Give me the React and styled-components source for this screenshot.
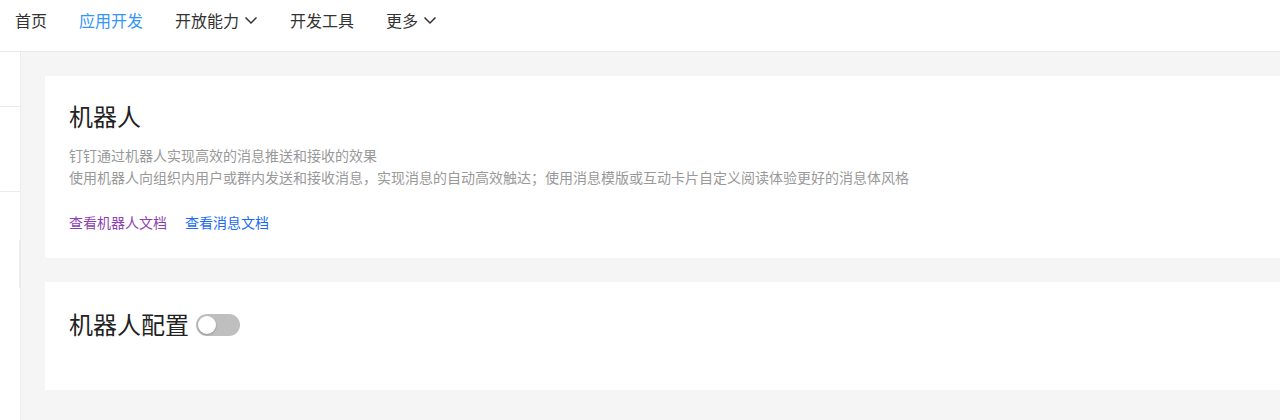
import React, { useState } from "react";
import styled, { createGlobalStyle } from "styled-components";

const GlobalStyle = createGlobalStyle`
  html, body {
    margin: 0;
    padding: 0;
    background: #fff;
    font-family: "Noto Sans CJK SC", "Noto Sans", sans-serif;
    color: #191919;
  }
  * {
    box-sizing: border-box;
  }
`;

const Page = styled.div`
  display: flex;
  flex-direction: column;
  height: 420px;
  overflow: hidden;
`;

const TopNav = styled.nav`
  display: flex;
  align-items: flex-start;
  gap: 32px;
  height: 52px;
  padding: 8px 0 0 15px;
  border-bottom: 1px solid #e8e8e8;
  background: #fff;
  flex-shrink: 0;
`;

const NavItem = styled.a`
  display: flex;
  align-items: center;
  gap: 5px;
  font-size: 16px;
  line-height: 24px;
  color: ${(p) => (p.$active ? "#3296fa" : "#333")};
  text-decoration: none;
  cursor: pointer;

  svg {
    width: 14px;
    height: 14px;
  }
`;

const Body = styled.div`
  display: flex;
  flex: 1;
  min-height: 0;
`;

const Sidebar = styled.aside`
  position: relative;
  width: 21px;
  flex-shrink: 0;
  background: #fff;
  border-right: 1px solid #ebebeb;
`;

const SideBlock = styled.div`
  height: ${(p) => p.$h}px;
  border-bottom: 1px solid #ebebeb;
`;

const CollapseHandle = styled.div`
  position: absolute;
  right: -1px;
  top: 188px;
  width: 2px;
  height: 48px;
  background: #ececec;
`;

const Main = styled.main`
  flex: 1;
  display: flex;
  flex-direction: column;
  gap: 24px;
  padding: 24px 0 0 24px;
  background: #f5f5f5;
`;

const Card = styled.section`
  background: #fff;
  padding: ${(p) => p.$pad};
`;

const Title = styled.h2`
  display: flex;
  align-items: center;
  gap: 7px;
  margin: 0;
  font-size: 24px;
  line-height: 32px;
  font-weight: 400;
  color: #222;
`;

const Desc = styled.div`
  margin-top: 12px;
  font-size: 14px;
  line-height: 22px;
  color: #999;
`;

const Links = styled.div`
  display: flex;
  gap: 18px;
  margin-top: 23px;
`;

const DocLink = styled.a`
  font-size: 14px;
  line-height: 22px;
  color: ${(p) => (p.$visited ? "#8e3fb2" : "#1a6cf5")};
  text-decoration: none;
  cursor: pointer;
`;

const Switch = styled.button`
  position: relative;
  width: 44px;
  height: 22px;
  margin-top: 2px;
  padding: 0;
  border: none;
  border-radius: 11px;
  background: ${(p) => (p.$on ? "#3296fa" : "#bfbfbf")};
  cursor: pointer;
  transition: background 0.2s;

  &::after {
    content: "";
    position: absolute;
    top: 2px;
    left: ${(p) => (p.$on ? "24px" : "2px")};
    width: 18px;
    height: 18px;
    border-radius: 50%;
    background: #fff;
    box-shadow: 0 1px 2px rgba(0, 0, 0, 0.25);
    transition: left 0.2s;
  }
`;

function Chevron() {
  return (
    <svg viewBox="0 0 14 14" fill="none" stroke="#333" strokeWidth="1.5">
      <path d="M1.5 4.5 L7 10 L12.5 4.5" />
    </svg>
  );
}

function App() {
  const [enabled, setEnabled] = useState(false);

  return (
    <Page>
      <GlobalStyle />
      <TopNav>
        <NavItem>首页</NavItem>
        <NavItem $active>应用开发</NavItem>
        <NavItem>
          开放能力
          <Chevron />
        </NavItem>
        <NavItem>开发工具</NavItem>
        <NavItem>
          更多
          <Chevron />
        </NavItem>
      </TopNav>
      <Body>
        <Sidebar>
          <SideBlock $h={55} />
          <SideBlock $h={85} />
          <CollapseHandle />
        </Sidebar>
        <Main>
          <Card $pad="24px 24px 25px">
            <Title>机器人</Title>
            <Desc>
              钉钉通过机器人实现高效的消息推送和接收的效果
              <br />
              使用机器人向组织内用户或群内发送和接收消息，实现消息的自动高效触达；使用消息模版或互动卡片自定义阅读体验更好的消息体风格
            </Desc>
            <Links>
              <DocLink $visited>查看机器人文档</DocLink>
              <DocLink>查看消息文档</DocLink>
            </Links>
          </Card>
          <Card $pad="26px 24px 50px">
            <Title>
              机器人配置
              <Switch $on={enabled} onClick={() => setEnabled(!enabled)} />
            </Title>
          </Card>
        </Main>
      </Body>
    </Page>
  );
}

export default App;
